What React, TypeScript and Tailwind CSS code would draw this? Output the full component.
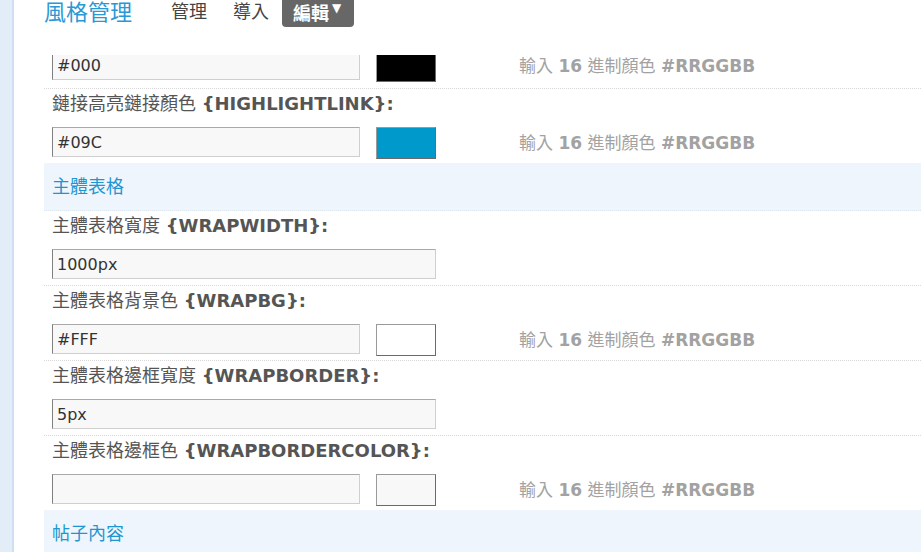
import React from "react";

const FONT = '"DejaVu Sans", "Noto Sans CJK TC", sans-serif';

function Input({ value, wide }: { value: string; wide?: boolean }) {
  return (
    <div
      className={`${wide ? "w-[384px]" : "w-[308px]"} h-[30px] shrink-0 overflow-hidden bg-[#f8f8f8] border border-t-[#a9a9a9] border-l-[#7f7f7f] border-r-[#cfcfcf] border-b-[#cfcfcf] pl-[4px] pt-[1px] text-[16px] leading-[28px] text-[#333]`}
    >
      {value}
    </div>
  );
}

function Swatch({ color }: { color: string }) {
  return (
    <div
      className="ml-[16px] w-[60px] h-[32px] shrink-0 border border-t-[#9a9a9a] border-l-[#9a9a9a] border-r-[#6a6a6a] border-b-[#6a6a6a]"
      style={{ backgroundColor: color }}
    />
  );
}

function Hint() {
  return (
    <div className="ml-[83px] h-[32px] leading-[32px] text-[17px] text-[#a2a2a2] whitespace-nowrap">
      輸入 <span className="font-bold">16</span> 進制顏色 <span className="font-bold">#RRGGBB</span>
    </div>
  );
}

function Item({
  cn,
  code,
  value,
  color,
  last,
}: {
  cn: string;
  code: string;
  value: string;
  color?: string;
  last?: boolean;
}) {
  return (
    <div
      className={`shrink-0 pl-[8px] pt-[1px] pb-[4px] ${
        last ? "" : "border-b border-dotted border-[#d8d8d8]"
      }`}
    >
      <div className="h-[28px] leading-[28px] text-[18px] text-[#555] whitespace-nowrap">
        {cn} <span className="font-bold">{code}:</span>
      </div>
      <div className="mt-[9px] h-[32px] flex items-start">
        <Input value={value} wide={!color} />
        {color && <Swatch color={color} />}
        {color && <Hint />}
      </div>
    </div>
  );
}

function Section({ title }: { title: string }) {
  return (
    <div className="shrink-0 h-[48px] pl-[8px] bg-[#eef5fc] border-b border-dotted border-[#dce6ef] flex items-center text-[18px] text-[#1e96d1]">
      {title}
    </div>
  );
}

export default function App() {
  return (
    <div className="flex h-[552px] overflow-hidden bg-white" style={{ fontFamily: FONT }}>
      <div className="w-[14px] shrink-0 bg-[#e2edf8] border-r-2 border-[#cddff0]" />
      <div className="flex-1 pl-[30px] flex flex-col">
        <div className="h-[55px] shrink-0 flex items-start">
          <div className="text-[22px] leading-[26px] text-[#2a98d4]">風格管理</div>
          <div className="ml-[39px] text-[18px] leading-[24px] text-[#444]">管理</div>
          <div className="ml-[26px] text-[18px] leading-[24px] text-[#444]">導入</div>
          <div className="ml-[13px] h-[27px] pl-[11px] pr-[13px] bg-[#676767] rounded-b-[4px] flex items-start text-white">
            <span className="text-[18px] leading-[27px] font-bold">編輯</span>
            <span className="ml-[3px] text-[12px] leading-[17px]">▼</span>
          </div>
        </div>
        <div className="h-[34px] shrink-0 overflow-hidden pl-[8px] border-b border-dotted border-[#d8d8d8]">
          <div className="-mt-[5px] flex items-start">
            <Input value="#000" />
            <Swatch color="#000000" />
            <Hint />
          </div>
        </div>
        <Item cn="鏈接高亮鏈接顏色" code="{HIGHLIGHTLINK}" value="#09C" color="#0099cc" last />
        <Section title="主體表格" />
        <Item cn="主體表格寬度" code="{WRAPWIDTH}" value="1000px" />
        <Item cn="主體表格背景色" code="{WRAPBG}" value="#FFF" color="#ffffff" />
        <Item cn="主體表格邊框寬度" code="{WRAPBORDER}" value="5px" />
        <Item cn="主體表格邊框色" code="{WRAPBORDERCOLOR}" value="" color="#f8f8f8" last />
        <Section title="帖子內容" />
      </div>
    </div>
  );
}
